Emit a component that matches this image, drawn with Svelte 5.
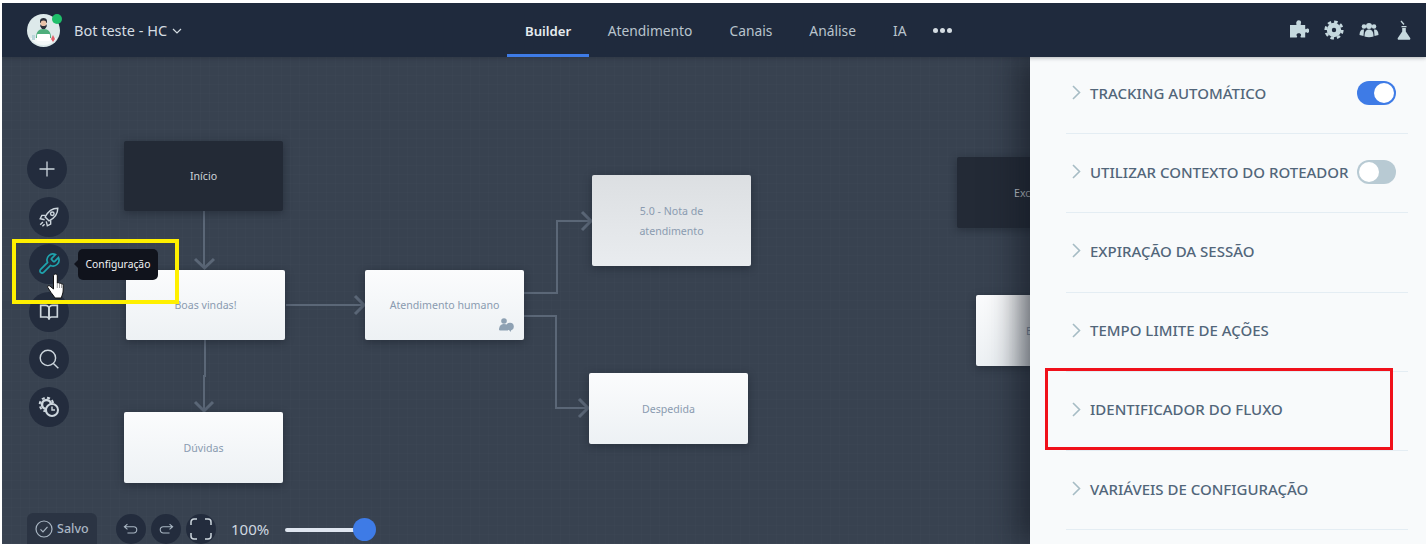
<script>
  const tabs = ["Builder", "Atendimento", "Canais", "Análise", "IA"];

  // positions are canvas coordinates, the canvas starts at 2,57
  const nodes = [
    { label: "Início", x: 122, y: 84, h: 70, kind: "dark" },
    { label: "Boas vindas!", x: 124, y: 213, h: 70 },
    { label: "Atendimento humano", x: 363, y: 213, h: 70, human: true },
    { label: "5.0 - Nota de atendimento", x: 590, y: 118, h: 91, kind: "dim" },
    { label: "Despedida", x: 587, y: 316, h: 71 },
    { label: "Dúvidas", x: 122, y: 355, h: 71 },
    { label: "Exceções", x: 955, y: 100, h: 71, kind: "dark" },
    { label: "Erro padrão", x: 974, y: 238, h: 71 },
  ];

  const links = [
    "M204 211V267",
    "M286 305H363",
    "M524 293H557V221H590",
    "M524 316H556V408H587",
    "M205 340V376H204V409",
  ];
  const heads = [
    "M195 259L204.500 268L214 259",
    "M355 296L364 305L355 314",
    "M582 212L591 221L582 230",
    "M579 399L588 408L579 417",
    "M195 402L204 411L213 402",
  ];

  const rows = [
    { label: "Tracking automático", toggle: "on" },
    { label: "Utilizar contexto do roteador", toggle: "off" },
    { label: "Expiração da sessão" },
    { label: "Tempo limite de ações" },
    { label: "Identificador do fluxo" },
    { label: "Variáveis de configuração" },
  ];
</script>

<div class="app">
  <header class="topbar">
    <div class="brand">
      <div class="avatar">
        <svg viewBox="0 0 33 33" width="33" height="33">
          <circle cx="16.500" cy="16.500" r="16.500" fill="#dde9ea" />
          <path d="M3 24h27a16.500 16.500 0 0 1-27 0z" fill="#f4f8f8" />
          <path d="M9 24c0-6 2.500-9 7.500-9s7.500 3 7.500 9z" fill="#4fae7c" />
          <path d="M13 7c0-2 1.500-3 3.500-3s3.500 1 3.500 3v2h-7z" fill="#2a2f3a" />
          <circle cx="16.500" cy="9.500" r="3" fill="#e9c3a8" />
          <path d="M13.300 10c.5 1.500 1.500 2 3.200 2s2.700-.5 3.200-2v2.500l-1.700 2.500h-3l-1.700-2.500z" fill="#2a2f3a" />
          <rect x="10" y="20" width="13" height="7" rx="1" fill="#fff" />
          <path d="M26 21l2 4-2 3-2-3z" fill="#e0606a" />
          <rect x="5" y="21" width="3" height="5" fill="#b9d6da" />
        </svg>
        <span class="status"></span>
      </div>
      <span class="bot-name">Bot teste - HC</span>
      <svg class="caret" viewBox="0 0 10 6" width="10" height="6"><path d="M1 1l4 4 4-4" fill="none" stroke="#d4dce2" stroke-width="1.200" /></svg>
    </div>

    <nav class="tabs">
      {#each tabs as tab, i}
        <span class="tab" class:active={i === 0}>{tab}</span>
      {/each}
      <span class="more"><i></i><i></i><i></i></span>
    </nav>

    <div class="tools">
      <svg viewBox="0 0 20 20" width="20" height="20"><path d="M7.500 2.500c0-1.500 1-2.200 2.300-2.200s2.300.7 2.300 2.200c0 .8-.5 1.200-.5 1.800 0 .4.300.6.800.6h3.800v3.500c0 .5.300.8.700.8.600 0 1-.6 1.800-.6 1.100 0 1.600 1 1.600 2.100s-.5 2.200-1.600 2.200c-.8 0-1.200-.6-1.800-.6-.4 0-.7.300-.7.800v4.300h-4c-.5 0-.8-.3-.8-.7 0-.6.700-1 .7-1.800 0-1-1.100-1.600-2.300-1.600s-2.300.6-2.300 1.600c0 .8.700 1.200.7 1.800 0 .4-.3.700-.8.700H1V6.200h0V4.900h5.700c.5 0 .9-.2.900-.6 0-.6-.6-1-.6-1.800z" fill="#c5d8de" /></svg>
      <svg viewBox="0 0 20 20" width="20" height="20">
        <circle cx="10" cy="10" r="4.700" fill="none" stroke="#c5d8de" stroke-width="5" />
        <circle cx="10" cy="10" r="8.300" fill="none" stroke="#c5d8de" stroke-width="2.600" stroke-dasharray="3.500 3" />
      </svg>
      <svg viewBox="0 0 20 20" width="20" height="20" fill="#c5d8de">
        <circle cx="5" cy="6.500" r="2.300" /><circle cx="15" cy="6.500" r="2.300" />
        <path d="M.5 15c0-3.500 1.500-5.500 3.500-5.500h1L4.500 16z" /><path d="M19.500 15c0-3.500-1.500-5.500-3.500-5.500h-1l.5 6.500z" />
        <circle cx="10" cy="6" r="3" />
        <path d="M5.500 16.500c0-4.500 1.500-7 4.500-7s4.500 2.500 4.500 7c-3 1-6 1-9 0z" />
      </svg>
      <svg class="flask" viewBox="0 0 14 20" width="14" height="20" fill="#c5d8de">
        <rect x="4.500" y="6" width="5" height="1.300" />
        <path d="M5.200 8h3.600v3.500L13.200 18c.5 1-.1 1.800-1 1.800H1.800c-.9 0-1.500-.8-1-1.800l4.400-6.500z" />
        <path d="M4 1l3 3.500" stroke="#c5d8de" stroke-width="1.300" />
      </svg>
    </div>
  </header>

  <main class="canvas">
    <svg class="links" viewBox="2 57 1424 487">
      {#each links as d}
        <path {d} fill="none" stroke="#5b6777" stroke-width="2" />
      {/each}
      {#each heads as d}
        <path {d} fill="none" stroke="#5b6777" stroke-width="3" />
      {/each}
    </svg>

    {#each nodes as node}
      <div class="node {node.kind ?? ''}" style="left: {node.x}px; top: {node.y}px; height: {node.h}px">
        <span class="node-label">{node.label}</span>
        {#if node.human}
          <svg class="human" viewBox="0 0 15 14" width="15" height="14" fill="#8ea1b3">
            <circle cx="5" cy="3" r="2.800" />
            <path d="M0 12c0-4 2-6 5-6s4 1 4 3v3.500H1z" />
            <circle cx="11" cy="8.500" r="3.800" />
            <path d="M10 11.500h2.500l-1 2.500z" />
          </svg>
        {/if}
      </div>
    {/each}

    <div class="rail">
      <button class="round first" aria-label="Adicionar">
        <svg viewBox="0 0 20 20" width="20" height="20"><path d="M10 2.500v15M2.500 10h15" stroke="#cdd6dd" stroke-width="1.300" /></svg>
      </button>
      <button class="round" aria-label="Lançar">
        <svg viewBox="0 0 20 20" width="22" height="22" fill="none" stroke="#cdd6dd" stroke-width="1.300">
          <path d="M18 2c-5 0-9 3-11.500 8l3.500 3.500c5-2.500 8-6.500 8-11.500z" />
          <path d="M7 8.500H3.500L2 11.500l4 1M11.500 13v3.500L8.500 18l-1-4" />
          <circle cx="13" cy="7" r="1.600" />
          <path d="M4.500 14.500l-2.500 2.500M6 16.500l-2 2" />
        </svg>
      </button>
      <button class="round" aria-label="Configuração">
        <svg viewBox="0 0 24 24" width="24" height="24" fill="none" stroke="#1fa3ad" stroke-width="1.700"><path d="M14.700 6.300a1 1 0 0 0 0 1.400l1.600 1.600a1 1 0 0 0 1.400 0l3.770-3.770a6 6 0 0 1-7.940 7.940l-6.910 6.910a2.120 2.120 0 0 1-3-3l6.910-6.910a6 6 0 0 1 7.940-7.940l-3.760 3.760z" /></svg>
      </button>
      <button class="round" aria-label="Ajuda">
        <svg viewBox="0 0 24 24" width="20" height="20" fill="none" stroke="#cdd6dd" stroke-width="2"><path d="M2 4h6a4 4 0 0 1 4 4v13a3 3 0 0 0-3-3H2z" /><path d="M22 4h-6a4 4 0 0 0-4 4v13a3 3 0 0 1 3-3h7z" /></svg>
      </button>
      <button class="round" aria-label="Buscar">
        <svg viewBox="0 0 20 20" width="22" height="22" fill="none" stroke="#cdd6dd" stroke-width="1.300"><circle cx="9" cy="9" r="7" /><path d="M14 14l4.500 4.500" /></svg>
      </button>
      <button class="round" aria-label="Histórico">
        <svg viewBox="0 0 22 22" width="22" height="22" fill="none" stroke="#cdd6dd">
          <circle cx="8.500" cy="8.500" r="4.500" stroke-width="2.500" />
          <circle cx="8.500" cy="8.500" r="6.800" stroke-width="2" stroke-dasharray="3 2.400" />
          <circle cx="14" cy="14" r="6" fill="#232c3d" stroke-width="2" />
          <path d="M14 10.500V14h3" stroke-width="1.400" />
        </svg>
      </button>
    </div>

    <div class="tooltip">Configuração</div>

    <svg class="hand" viewBox="0 0 18 26" width="18" height="26">
      <path d="M8.500 1c1.100 0 1.800.9 1.800 2v7c.6-.5 1.700-.4 2.200.4.700-.4 1.600-.2 2 .6.800-.3 1.700.2 1.700 1.400V17c0 3-1 5-2 8H8c-1-2-3-4-4-5.500L.8 14.500c-.7-1.300.9-2.500 2-1.500l3.700 3V3c0-1.100.9-2 2-2z" fill="#fff" stroke="#111" stroke-width="1" />
      <path d="M10.300 10v5M12.500 10.400V15M14.500 11v4" stroke="#777" stroke-width=".7" fill="none" />
    </svg>

    <div class="highlight yellow"></div>

    <div class="bottombar">
      <div class="saved">
        <svg viewBox="0 0 18 18" width="18" height="18" fill="none" stroke="#a9b6c3" stroke-width="1.200"><circle cx="9" cy="9" r="8" /><path d="M5.500 9.300l2.500 2.500 4.500-5" /></svg>
        <span>Salvo</span>
      </div>
      <div class="history">
        <button class="small" aria-label="Desfazer">
          <svg viewBox="0 0 18 14" width="16" height="13" fill="none" stroke="#a9b6c3" stroke-width="1.200"><path d="M5 2L1.500 5 5 8M1.500 5H12a3.500 3.500 0 0 1 0 7H5" /></svg>
        </button>
        <button class="small" aria-label="Refazer">
          <svg viewBox="0 0 18 14" width="16" height="13" fill="none" stroke="#a9b6c3" stroke-width="1.200"><path d="M13 2l3.500 3L13 8M16.500 5H6a3.500 3.500 0 0 0 0 7h7" /></svg>
        </button>
        <button class="small" aria-label="Tela cheia">
          <svg viewBox="0 0 22 22" width="22" height="22" fill="none" stroke="#cdd6dd" stroke-width="1.500"><path d="M1 7V4a3 3 0 0 1 3-3h3M15 1h3a3 3 0 0 1 3 3v3M21 15v3a3 3 0 0 1-3 3h-3M7 21H4a3 3 0 0 1-3-3v-3" /></svg>
        </button>
      </div>
      <span class="zoom-value">100%</span>
      <div class="slider"><span class="thumb"></span></div>
    </div>
  </main>

  <aside class="panel">
    <div class="list">
      {#each rows as row}
        <div class="row">
          <svg class="chevron" viewBox="0 0 9 15" width="9" height="15"><path d="M1 1l6.500 6.500L1 14" fill="none" stroke="#a6bcc4" stroke-width="1.600" /></svg>
          <span class="row-label">{row.label}</span>
          {#if row.toggle}
            <span class="toggle {row.toggle}"><span class="knob"></span></span>
          {/if}
        </div>
      {/each}
    </div>
  </aside>

  <div class="highlight red"></div>
</div>

<style>
  :global(body) {
    margin: 0;
    background: #fff;
    overflow: hidden;
  }

  .app {
    position: relative;
    height: 541px;
    margin: 3px 0 0 2px;
    display: flex;
    flex-direction: column;
    font-family: "Noto Sans", sans-serif;
    overflow: hidden;
  }

  .topbar {
    height: 54px;
    flex: none;
    display: flex;
    align-items: center;
    background: #1f2a3d;
    box-shadow: 0 1px 4px rgba(15, 20, 30, 0.3);
    position: relative;
    z-index: 3;
  }

  .brand {
    display: flex;
    align-items: center;
    width: 505px;
    padding-left: 25px;
    box-sizing: border-box;
    color: #d4dce2;
    font-size: 14.500px;
  }

  .avatar {
    position: relative;
    width: 33px;
    height: 33px;
    margin-right: 14px;
  }

  .avatar svg {
    display: block;
  }

  .status {
    position: absolute;
    top: 0.500px;
    right: -2px;
    width: 10px;
    height: 10px;
    border-radius: 50%;
    background: #1fbf6a;
  }

  .caret {
    margin-left: 5px;
    margin-top: 2px;
  }

  .tabs {
    display: flex;
    align-self: stretch;
    align-items: center;
  }

  .tab {
    height: 54px;
    line-height: 56px;
    padding: 0 18.500px;
    box-sizing: border-box;
    color: #b9c4cd;
    font-size: 13.800px;
  }

  .tab.active {
    padding: 0 18px;
    color: #e6ebef;
    font-size: 13.200px;
    font-weight: 600;
    border-bottom: 3px solid #3e7be6;
  }

  .more {
    display: flex;
    gap: 2px;
    margin-left: 8px;
  }

  .more i {
    width: 5px;
    height: 5px;
    border-radius: 50%;
    background: #d4dce2;
  }

  .tools {
    margin-left: auto;
    margin-right: 15px;
    display: flex;
    align-items: center;
    gap: 15px;
  }

  .flask {
    margin-left: 3px;
  }

  .canvas {
    flex: 1;
    position: relative;
    background-color: #384250;
    background-image:
      linear-gradient(rgba(255, 255, 255, 0.012) 1px, transparent 1px),
      linear-gradient(90deg, rgba(255, 255, 255, 0.012) 1px, transparent 1px);
    background-size: 9px 9px;
  }

  .links {
    position: absolute;
    inset: 0;
    width: 100%;
    height: 100%;
  }

  .node {
    position: absolute;
    width: 159px;
    padding: 0 18px;
    box-sizing: border-box;
    display: flex;
    align-items: center;
    justify-content: center;
    text-align: center;
    border-radius: 2px;
    background: linear-gradient(#fbfcfd, #edf1f4);
    box-shadow: 0 2px 8px rgba(15, 20, 30, 0.4);
    color: #8a9bb0;
    font-size: 10.600px;
    line-height: 20px;
  }

  .node.dark {
    background: #232a36;
    color: #cfd4da;
  }

  .node.dim {
    background: linear-gradient(#dcdfe2, #e9ecef);
  }

  .human {
    position: absolute;
    right: 10px;
    bottom: 8px;
  }

  .rail {
    position: absolute;
    left: 25px;
    top: 92px;
    display: flex;
    flex-direction: column;
    gap: 7.600px;
  }

  .round {
    width: 40px;
    height: 40px;
    border: 0;
    padding: 0;
    border-radius: 50%;
    background: #232c3d;
    display: flex;
    align-items: center;
    justify-content: center;
  }

  .rail .round:not(.first) {
    margin-left: 2px;
  }

  .tooltip {
    position: absolute;
    left: 76px;
    top: 192px;
    width: 80px;
    height: 31px;
    line-height: 30px;
    text-align: center;
    background: #10131c;
    border-radius: 5px;
    color: #f0f2f4;
    font-size: 10.300px;
  }

  .tooltip::before {
    content: "";
    position: absolute;
    left: -4px;
    top: 11px;
    border-style: solid;
    border-width: 4px 4px 4px 0;
    border-color: transparent #10131c transparent transparent;
  }

  .hand {
    position: absolute;
    left: 45px;
    top: 216px;
  }

  .highlight {
    position: absolute;
    box-sizing: border-box;
    pointer-events: none;
  }

  .yellow {
    left: 10px;
    top: 182px;
    width: 167px;
    height: 65px;
    border: 4px solid #fff000;
  }

  .red {
    left: 1043px;
    top: 365px;
    width: 348px;
    height: 82px;
    border: 3px solid #f0101a;
    z-index: 5;
  }

  .bottombar {
    position: absolute;
    left: 25px;
    bottom: 0;
    height: 31px;
    display: flex;
    align-items: center;
  }

  .saved {
    width: 70px;
    height: 31px;
    box-sizing: border-box;
    display: flex;
    align-items: center;
    gap: 4px;
    padding-left: 8px;
    border-radius: 6px 6px 0 0;
    background: #2b3443;
    color: #a9b6c3;
    font-size: 12.500px;
    font-weight: 500;
  }

  .history {
    display: flex;
    gap: 5px;
    margin-left: 19px;
  }

  .small {
    width: 30px;
    height: 30px;
    border: 0;
    padding: 0;
    border-radius: 50%;
    background: #232c3d;
    display: flex;
    align-items: center;
    justify-content: center;
  }

  .zoom-value {
    margin-left: 15px;
    width: 54px;
    color: #cfd8e0;
    font-size: 15px;
  }

  .slider {
    position: relative;
    width: 72px;
    height: 4px;
    margin-top: 3px;
    border-radius: 2px;
    background: #dfe6f0;
  }

  .thumb {
    position: absolute;
    right: -18.500px;
    top: -10px;
    width: 23px;
    height: 23px;
    border-radius: 50%;
    background: #3e7be6;
  }

  .panel {
    position: absolute;
    top: 54px;
    right: 0;
    bottom: 0;
    width: 396px;
    background: #f8fafb;
    box-shadow: -10px 0 30px rgba(20, 25, 35, 0.7);
    overflow: hidden;
    z-index: 2;
  }

  .list {
    margin: -2px 18px 0 36px;
  }

  .row {
    height: 79.200px;
    padding-bottom: 3px;
    box-sizing: border-box;
    display: flex;
    align-items: center;
    border-bottom: 1px solid #e4edf3;
  }

  .chevron {
    margin-left: 6px;
    margin-right: 9px;
  }

  .row-label {
    color: #52667a;
    font-size: 15px;
    font-weight: 500;
    text-transform: uppercase;
  }

  .toggle {
    margin-left: auto;
    margin-right: 12px;
    width: 39px;
    height: 24px;
    padding: 2px;
    box-sizing: border-box;
    border-radius: 12px;
    display: flex;
    flex: none;
  }

  .toggle.on {
    background: #3e7be6;
    justify-content: flex-end;
  }

  .toggle.off {
    background: #b8cad3;
  }

  .knob {
    width: 20px;
    height: 20px;
    border-radius: 50%;
    background: #fff;
  }
</style>
